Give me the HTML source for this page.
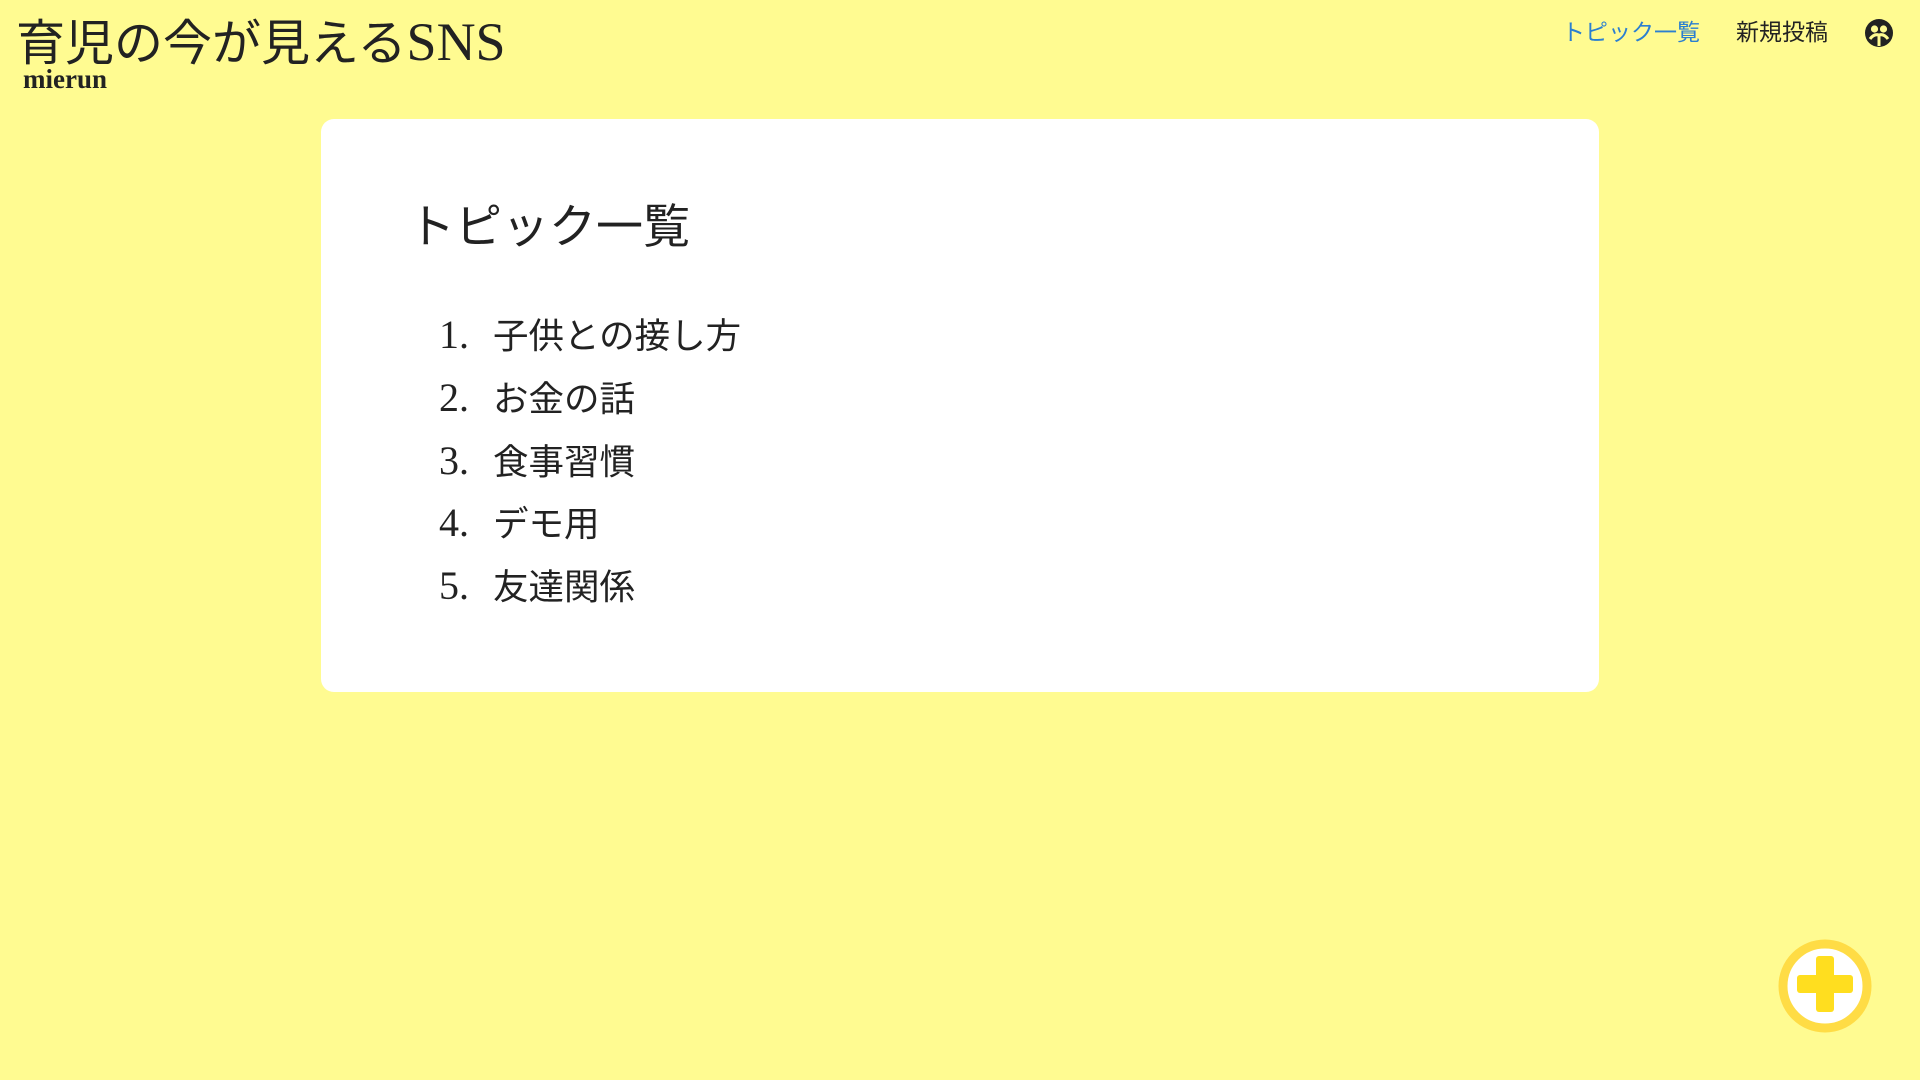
<!DOCTYPE html>
<html><head><meta charset="utf-8"><style>
html,body{margin:0;padding:0;}
body{width:1920px;height:1080px;background:#fffb91;position:relative;overflow:hidden;font-family:"Liberation Serif","Noto Sans CJK JP",serif;color:#222;}
.title{position:absolute;left:16px;top:12px;font-size:49px;line-height:60px;white-space:nowrap;}
.title .l{font-size:54px;}
.sub{position:absolute;left:23px;top:62px;font-size:27px;font-weight:bold;line-height:34px;}
.nav{position:absolute;top:14px;font-family:"Liberation Sans","Noto Sans CJK JP",sans-serif;font-size:23px;line-height:36px;}
.card{position:absolute;left:321px;top:119px;width:1278px;height:573px;background:#fff;border-radius:13px;}
h1{position:absolute;left:87px;top:80px;margin:0;font-weight:normal;font-size:47px;line-height:56px;font-family:"Liberation Sans","Noto Sans CJK JP",sans-serif;}
.row{position:absolute;left:118px;font-size:40px;line-height:44px;white-space:nowrap;}
.row span{display:inline-block;width:54px;}
.row b{font-weight:normal;font-family:"Liberation Sans","Noto Sans CJK JP",sans-serif;font-size:35.5px;}
</style></head><body>
<div class="title">育児の今が見える<span class="l">SNS</span></div>
<div class="sub">mierun</div>
<div class="nav" style="left:1562px;color:#2b7fd0">トピック一覧</div>
<div class="nav" style="left:1736px;">新規投稿</div>
<svg style="position:absolute;left:1864px;top:18px" width="30" height="30" viewBox="0 0 30 30">
<circle cx="15" cy="15" r="14" fill="#222"/>
<circle cx="10.5" cy="11" r="3.6" fill="#fffb91"/>
<circle cx="19.5" cy="11" r="3.6" fill="#fffb91"/>
<path d="M6 21 Q10 15.5 15 17 Q20 15.5 24 21" stroke="#fffb91" stroke-width="3" fill="none"/>
<rect x="13.5" y="17" width="3" height="11" fill="#fffb91"/>
</svg>
<div class="card">
<h1>トピック一覧</h1>
<div class="row" style="top:194px"><span>1.</span><b>子供との接し方</b></div>
<div class="row" style="top:257px"><span>2.</span><b>お金の話</b></div>
<div class="row" style="top:320px"><span>3.</span><b>食事習慣</b></div>
<div class="row" style="top:382px"><span>4.</span><b>デモ用</b></div>
<div class="row" style="top:445px"><span>5.</span><b>友達関係</b></div>
</div>
<svg style="position:absolute;left:1777px;top:938px" width="96" height="96" viewBox="0 0 96 96">
<circle cx="48" cy="48" r="42" fill="#fff" stroke="#ffdc45" stroke-width="9"/>
<rect x="39" y="18" width="18" height="56" rx="3" fill="#ffde1f"/>
<rect x="20" y="37" width="56" height="18" rx="3" fill="#ffde1f"/>
</svg>
</body></html>
